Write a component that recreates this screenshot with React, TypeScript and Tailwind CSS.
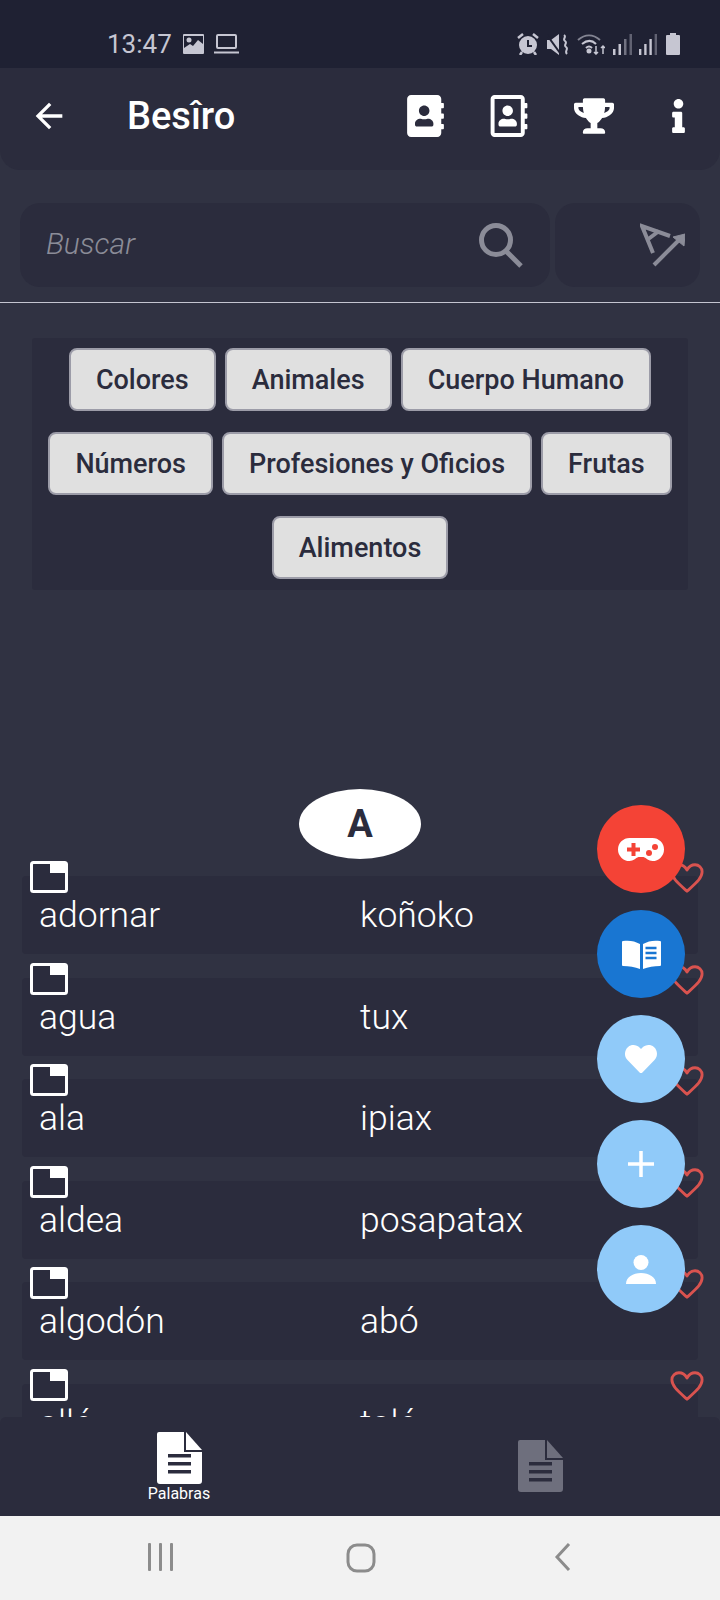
import React from "react";
import { FaAddressBook, FaRegAddressBook, FaTrophy, FaInfo, FaHeart } from "react-icons/fa";
import { MdArrowBack } from "react-icons/md";

const row1 = ["Colores", "Animales", "Cuerpo Humano", "Números", "Profesiones y Oficios", "Frutas", "Alimentos"];
const words = [
  ["adornar", "koñoko"],
  ["agua", "tux"],
  ["ala", "ipiax"],
  ["aldea", "posapatax"],
  ["algodón", "abó"],
  ["allé", "talé"],
];

function Doc({ color, cut, className }: { color: string; cut: string; className: string }) {
  return (
    <svg viewBox="0 0 45 52" className={className}>
      <path d="M2 0H27V20H45V49a3 3 0 0 1-3 3H3a3 3 0 0 1-3-3V2a2 2 0 0 1 2-2Z" fill={color} />
      <path d="M29 0L45 18H29Z" fill={color} />
      <rect x="11" y="22" width="23" height="3.5" fill={cut} />
      <rect x="11" y="30" width="23" height="3.5" fill={cut} />
      <rect x="11" y="38" width="23" height="3.5" fill={cut} />
    </svg>
  );
}

function Folder() {
  return (
    <svg viewBox="0 0 38 32" className="absolute left-[8px] top-[-15px] w-[38px] h-[32px]">
      <rect x="1.5" y="1.5" width="35" height="29" rx="2" fill="#2b2c3d" stroke="#fff" strokeWidth="3" />
      <rect x="20" y="1" width="17" height="11" fill="#fff" />
    </svg>
  );
}

function Heart() {
  return (
    <svg viewBox="0 0 36 32" className="absolute right-[-6px] top-[-14px] w-[34px] h-[32px]">
      <path
        d="M18 30C8 21 2 16 2 9.5 2 5 5.5 2 9.5 2c3.5 0 6.5 2 8.5 5.5C20 4 23 2 26.500 2 30.500 2 34 5 34 9.500 34 16 28 21 18 30Z"
        fill="none"
        stroke="#d9534f"
        strokeWidth="3"
        strokeLinejoin="round"
      />
    </svg>
  );
}

function Fab({ bg, children }: { bg: string; children: React.ReactNode }) {
  return (
    <div className={`w-[88px] h-[88px] rounded-full flex items-center justify-center ${bg}`}>{children}</div>
  );
}

function Signal({ className, third }: { className: string; third: number }) {
  return (
    <svg viewBox="0 0 19 21" preserveAspectRatio="none" className={className} fill="currentColor">
      <rect x="0" y="15" width="2.500" height="6" />
      <rect x="5.500" y="10" width="2.500" height="11" />
      <rect x="11" y="5" width="2.500" height="16" opacity={third} />
      <rect x="16.500" y="0" width="2.500" height="21" opacity=".4" />
    </svg>
  );
}

export default function App() {
  return (
    <div
      className="relative w-[720px] h-[1600px] overflow-hidden bg-[#303242] flex flex-col"
      style={{ fontFamily: "Roboto, 'Liberation Sans', sans-serif" }}
    >
      {/* status bar */}
      <div className="h-[68px] shrink-0 bg-[#1f2133] flex items-center pl-[107px] pr-[40px] pt-[20px] text-[#c6c6d2]">
        <span className="text-[26px] leading-none w-[64px]">13:47</span>
        <svg viewBox="0 0 21 20" className="w-[21px] h-[20px] ml-[12px]">
          <rect width="21" height="20" rx="1" fill="currentColor" />
          <path d="M1 2h19v8l-5-4-5 6-3-2-6 4Z" fill="#1f2133" />
          <circle cx="6" cy="6" r="2.500" fill="currentColor" />
        </svg>
        <svg viewBox="0 0 25 20" className="w-[25px] h-[20px] ml-[10px]" fill="none" stroke="currentColor" strokeWidth="2">
          <rect x="3" y="1" width="19" height="13" rx="1" />
          <path d="M0 18.500h25" />
        </svg>
        <div className="flex-1" />
        <svg viewBox="0 0 22 22" className="w-[22px] h-[22px]">
          <path d="M1 5l5-4M21 5l-5-4M5 19l-2 3M17 19l2 3" stroke="currentColor" strokeWidth="2.500" fill="none" />
          <circle cx="11" cy="12" r="9" fill="currentColor" />
          <path d="M11 7v6h4" stroke="#1f2133" strokeWidth="2" fill="none" />
        </svg>
        <svg viewBox="0 0 21 21" className="w-[21px] h-[21px] ml-[8px]" fill="currentColor">
          <path d="M0 6h4l8-6v21l-8-6H0Z" />
          <path d="M0 1l13 18" stroke="#1f2133" strokeWidth="2" />
          <path d="M17 1c3 2-2 4 1 6s-2 4 1 6-2 4 1 7" fill="none" stroke="currentColor" strokeWidth="2" />
        </svg>
        <svg viewBox="0 0 28 21" className="w-[28px] h-[21px] ml-[9px]" fill="none" stroke="currentColor" strokeWidth="2">
          <path d="M1 6c7-6 15-6 22 0" opacity=".6" />
          <path d="M5 10c5-4 10-4 14 0" />
          <path d="M9 14c2-2 4-2 6 0" />
          <circle cx="12" cy="17" r="1.500" fill="currentColor" />
          <path d="M19 12v8M17 18l2 2 2-2M26 20v-8M24 14l2-2 2 2" strokeWidth="1.500" />
        </svg>
        <Signal className="w-[19px] h-[21px] ml-[8px]" third={0.5} />
        <Signal className="w-[18px] h-[21px] ml-[7px]" third={1} />
        <svg viewBox="0 0 14 22" className="w-[14px] h-[22px] ml-[9px]" fill="currentColor">
          <path d="M4 0h6v2h3a1 1 0 0 1 1 1v18a1 1 0 0 1-1 1H1a1 1 0 0 1-1-1V3a1 1 0 0 1 1-1h3Z" />
        </svg>
      </div>

      {/* app header */}
      <div className="h-[102px] shrink-0 bg-[#2b2c3d] rounded-b-[20px] flex items-center text-white">
        <MdArrowBack className="w-[40px] h-[40px] ml-[29px] mb-[7px]" />
        <h1 className="ml-[58px] mb-[6px] text-[38px] font-medium leading-none w-[279px]">Besîro</h1>
        <FaAddressBook className="w-[39px] h-[42px] mb-[7px]" />
        <FaRegAddressBook className="w-[40px] h-[42px] ml-[44px] mb-[7px]" />
        <FaTrophy className="w-[40px] h-[36px] ml-[45px] mb-[7px]" />
        <FaInfo className="w-[17px] h-[34px] ml-[56px] mb-[7px]" />
      </div>

      {/* search */}
      <div className="mt-[33px] h-[84px] shrink-0 px-[20px] flex gap-[5px]">
        <div className="w-[530px] rounded-[20px] bg-[#2b2c3d] flex items-center pl-[26px] pr-[27px] justify-between">
          <span className="text-[30px] italic font-light text-[#8b8c98] mb-[4px]">Buscar</span>
          <svg viewBox="0 0 44 45" className="w-[44px] h-[45px]" fill="none" stroke="#8b8c98" strokeWidth="5">
            <circle cx="17" cy="17" r="14.500" />
            <path d="M27 28l15 15" />
          </svg>
        </div>
        <div className="flex-1 rounded-[20px] bg-[#2b2c3d] flex items-center justify-end pr-[15px]">
          <svg viewBox="0 0 45 44" className="w-[45px] h-[44px]" fill="none" stroke="#8b8c98" strokeWidth="4">
            <path d="M13 30L2 3l28 10" />
            <path d="M7 17L19 8" />
            <path d="M14 42L40 16" />
            <path d="M33 14l12-3-1 12Z" fill="#8b8c98" strokeWidth="1" />
          </svg>
        </div>
      </div>

      <div className="mt-[15px] h-px shrink-0 bg-[#c4c5d0]" />

      {/* categories */}
      <div className="mt-[35px] mx-[32px] h-[252px] shrink-0 bg-[#2b2c3d] rounded-[3px] flex flex-wrap justify-center content-start gap-x-[9px] gap-y-[21px] pt-[10px]">
        {row1.map((c) => (
          <button
            key={c}
            className="h-[63px] px-[25px] pt-[1px] bg-[#e0e0e0] border-2 border-[#9c9ca8] rounded-[8px] text-[27px] font-[480] text-[#2b2c3d] leading-none"
          >
            {c}
          </button>
        ))}
      </div>

      {/* word list */}
      <div className="flex-1 min-h-0 overflow-hidden">
        <div className="mt-[199px] mx-auto w-[122px] h-[70px] rounded-[50%] bg-white flex items-center justify-center text-[38px] font-bold text-[#2b2c3d]">
          A
        </div>
        <div className="mt-[17px] mx-[22px] flex flex-col gap-[23.5px]">
          {words.map(([a, b]) => (
            <div
              key={a}
              className="relative h-[78px] shrink-0 bg-[#2b2c3d] rounded-[4px] flex items-center pl-[17px] pt-[2px] text-[35.5px] font-light text-white leading-none"
            >
              <Folder />
              <span className="w-[321px]">{a}</span>
              <span>{b}</span>
              <Heart />
            </div>
          ))}
        </div>
      </div>

      {/* bottom tabs */}
      <div className="h-[99px] shrink-0 bg-[#2b2c3d] rounded-t-[6px] flex">
        <div className="w-[358px] flex flex-col items-center pt-[15px]">
          <Doc color="#fff" cut="#2b2c3d" className="w-[45px] h-[52px]" />
          <span className="mt-[1px] text-[16px] leading-[18px] text-white">Palabras</span>
        </div>
        <div className="flex-1 flex justify-center pt-[23px] pl-[2px]">
          <Doc color="#6e6f7d" cut="#2b2c3d" className="w-[45px] h-[52px]" />
        </div>
      </div>

      {/* android navigation */}
      <div className="h-[84px] shrink-0 bg-[#f2f2f2] flex items-start pt-[27px] text-[#8c8c8c]">
        <svg viewBox="0 0 26 28" className="ml-[148px] w-[26px] h-[28px]" fill="currentColor">
          <rect x="0" y="0" width="3" height="28" rx="1" />
          <rect x="11" y="0" width="3" height="28" rx="1" />
          <rect x="22" y="0" width="3" height="28" rx="1" />
        </svg>
        <svg viewBox="0 0 30 30" className="ml-[172px] w-[30px] h-[30px]" fill="none" stroke="currentColor" strokeWidth="3">
          <rect x="2" y="2" width="26" height="26" rx="9" />
        </svg>
        <svg viewBox="0 0 18 28" className="ml-[178px] w-[18px] h-[28px]" fill="none" stroke="currentColor" strokeWidth="3">
          <path d="M15 1L3 14l12 13" />
        </svg>
      </div>

      {/* floating action buttons */}
      <div className="absolute left-[597px] top-[805px] flex flex-col gap-[17px] text-white">
        <Fab bg="bg-[#f44336]">
          <svg viewBox="0 0 46 23" className="w-[46px] h-[23px]">
            <path d="M11.500 0h23a11.500 11.500 0 0 1 0 23c-4 0-6-3-9-4h-5c-3 1-5 4-9 4a11.500 11.500 0 0 1 0-23Z" fill="#fff" />
            <path d="M9 9.500h4.500V5h4v4.500H22v4h-4.500V18h-4v-4.500H9Z" fill="#f44336" />
            <circle cx="37" cy="9" r="3" fill="#f44336" />
            <circle cx="31" cy="15" r="3" fill="#f44336" />
          </svg>
        </Fab>
        <Fab bg="bg-[#1976d2]">
          <svg viewBox="0 0 39 29" className="w-[39px] h-[29px]">
            <path d="M1 1c6-1 12 0 17 3v25c-5-2-11-3-17-3a1 1 0 0 1-1-1V2a1 1 0 0 1 1-1Z" fill="#fff" />
            <path d="M38 1c-6-1-12 0-17 3v25c5-2 11-3 17-3a1 1 0 0 0 1-1V2a1 1 0 0 0-1-1Z" fill="#fff" />
            <path d="M23.500 8h11M23.500 13h11M23.500 18h11" stroke="#1976d2" strokeWidth="2.500" />
          </svg>
        </Fab>
        <Fab bg="bg-[#90caf9]">
          <FaHeart className="w-[36px] h-[32px]" />
        </Fab>
        <Fab bg="bg-[#90caf9]">
          <svg viewBox="0 0 26 26" className="w-[26px] h-[26px]" stroke="#fff" strokeWidth="3.500">
            <path d="M13 0v26M0 13h26" />
          </svg>
        </Fab>
        <Fab bg="bg-[#90caf9]">
          <svg viewBox="0 0 30 29" className="w-[30px] h-[29px]" fill="#fff">
            <circle cx="15" cy="7.500" r="7.500" />
            <path d="M0 29c0-7 7-11 15-11s15 4 15 11Z" />
          </svg>
        </Fab>
      </div>
    </div>
  );
}
